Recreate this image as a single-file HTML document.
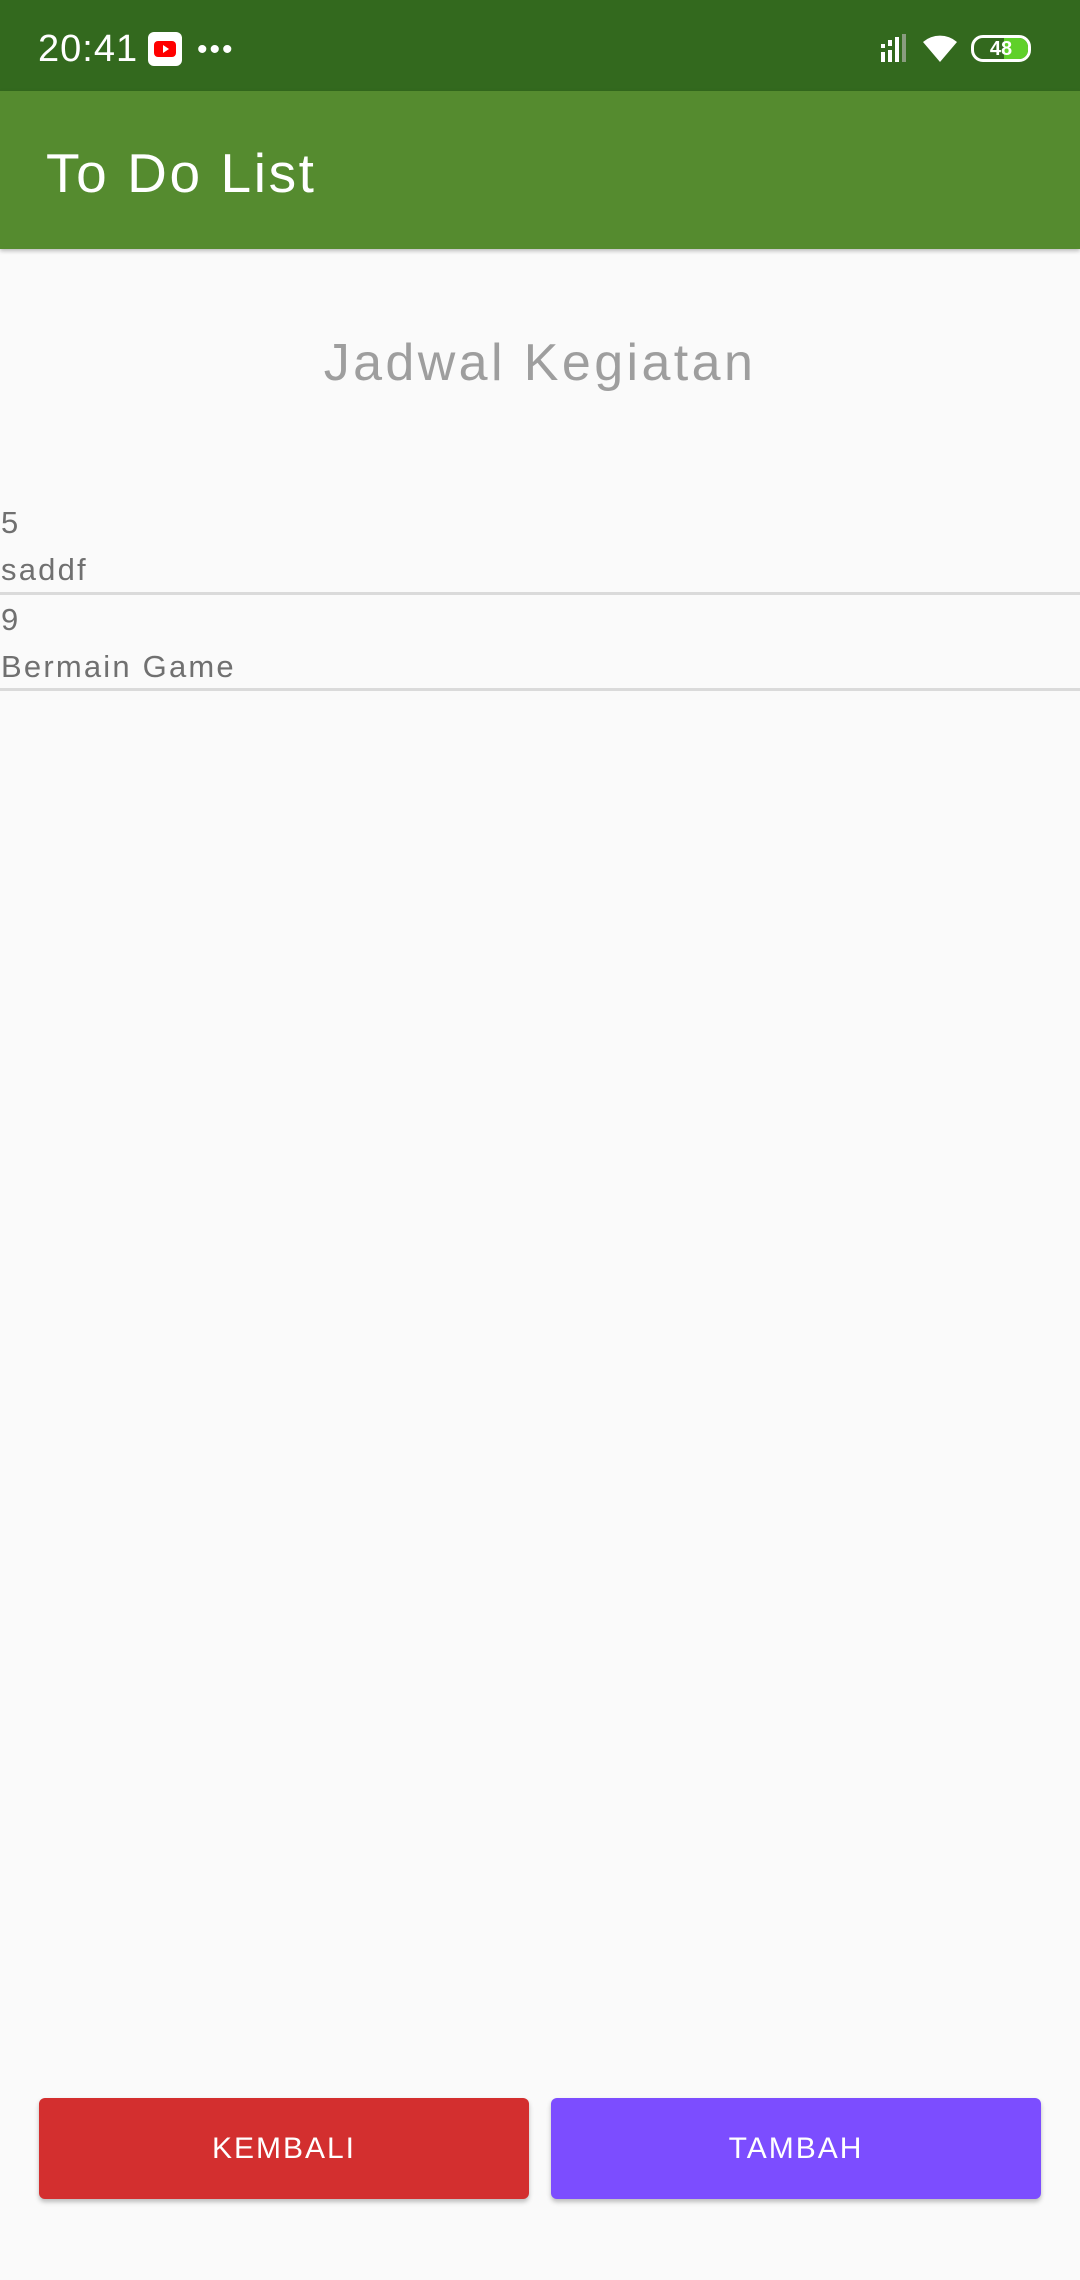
<!DOCTYPE html>
<html><head><meta charset="utf-8"><style>
*{margin:0;padding:0;box-sizing:border-box}
body{width:1080px;height:2280px;background:#fafafa;font-family:"Liberation Sans",sans-serif;position:relative;overflow:hidden}
.sb{position:absolute;left:0;top:0;width:1080px;height:91px;background:#33691e;color:#fff}
.ab{position:absolute;left:0;top:91px;width:1080px;height:158px;background:#558b2f;box-shadow:0 2px 4px rgba(0,0,0,.25)}
.abt{position:absolute;left:46px;top:138px;font-size:55px;color:#fff;line-height:70px;letter-spacing:2.6px}
.h{position:absolute;left:0;width:1080px;top:330px;text-align:center;font-size:52px;color:#9e9e9e;line-height:66px;letter-spacing:3.4px}
.t{position:absolute;left:1px;font-size:31px;color:#707070;line-height:40px;letter-spacing:2.2px}
.d{position:absolute;left:0;width:1080px;height:3px;background:#dadada}
.btn{position:absolute;top:2098px;height:101px;border-radius:6px;color:#fff;font-size:30px;text-align:center;line-height:101px;box-shadow:0 3px 5px rgba(0,0,0,.25);letter-spacing:2px}
</style></head><body>
<div class="sb">
<div style="position:absolute;left:38px;top:26px;font-size:38px;line-height:46px;letter-spacing:1px">20:41</div>
<div style="position:absolute;left:148px;top:32px;width:34px;height:34px;background:#fff;border-radius:6px"><div style="position:absolute;left:6px;top:9px;width:22px;height:16px;background:#f00;border-radius:4px"></div><div style="position:absolute;left:15px;top:13px;width:0;height:0;border-left:6px solid #fff;border-top:4px solid transparent;border-bottom:4px solid transparent"></div></div>
<div style="position:absolute;left:197px;top:33px;font-size:30px;letter-spacing:2px">•••</div>
<svg style="position:absolute;left:880px;top:34px" width="30" height="30"><rect x="1" y="10" width="4" height="4" fill="#fff"/><rect x="1" y="18" width="4" height="10" fill="#fff"/><rect x="8" y="6" width="4" height="6" fill="#fff"/><rect x="8" y="16" width="4" height="12" fill="#fff"/><rect x="15" y="3" width="4" height="25" fill="#fff"/><rect x="22" y="0" width="4" height="28" fill="#8a9c80"/></svg>
<svg style="position:absolute;left:922px;top:32px" width="36" height="32" viewBox="0 0 36 32"><path d="M18 30 L1 10 A26 26 0 0 1 35 10 Z" fill="#fff"/></svg>
<div style="position:absolute;left:971px;top:35px;width:60px;height:27px;border:3px solid #fff;border-radius:12px;overflow:hidden"><div style="position:absolute;right:0;top:0;width:24px;height:100%;background:#5fd02a"></div><div style="position:absolute;left:0;width:100%;top:-2px;text-align:center;font-size:20px;font-weight:bold;line-height:26px">48</div></div>
</div>
<div class="ab"></div>
<div class="abt">To Do List</div>
<div class="h">Jadwal Kegiatan</div>
<div class="t" style="top:503px">5</div>
<div class="t" style="top:550px">saddf</div>
<div class="d" style="top:592px"></div>
<div class="t" style="top:600px">9</div>
<div class="t" style="top:647px">Bermain Game</div>
<div class="d" style="top:688px"></div>
<div class="btn" style="left:39px;width:490px;background:#d32f2f">KEMBALI</div>
<div class="btn" style="left:551px;width:490px;background:#7c4dff">TAMBAH</div>
</body></html>
